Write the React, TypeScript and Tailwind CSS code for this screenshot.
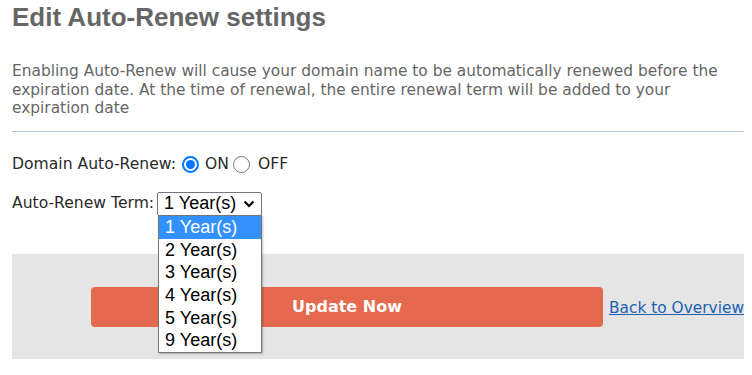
import React from "react";

const verdana = { fontFamily: '"DejaVu Sans", Verdana, sans-serif' };
const arial = { fontFamily: '"Liberation Sans", Arial, sans-serif' };

function Radio({ checked }: { checked: boolean }) {
  return checked ? (
    <span className="inline-flex h-[17px] w-[17px] items-center justify-center rounded-full border-[2px] border-[#0075ff] bg-white">
      <span className="h-[9px] w-[9px] rounded-full bg-[#0075ff]" />
    </span>
  ) : (
    <span className="inline-block h-[17px] w-[17px] rounded-full border-[1.5px] border-[#767676] bg-white" />
  );
}

export default function App() {
  const options = ["1 Year(s)", "2 Year(s)", "3 Year(s)", "4 Year(s)", "5 Year(s)", "9 Year(s)"];
  return (
    <div className="h-[375px] w-[752px] overflow-hidden bg-white">
      <div className="w-[744px] pl-[12px]">
        <h1 className="pt-[2px] text-[26px] font-bold leading-[30px] text-[#666666]" style={arial}>
          Edit Auto-Renew settings
        </h1>
        <p className="mt-[30px] text-[15.4px] leading-[18.5px] text-[#666666]" style={verdana}>
          Enabling Auto-Renew will cause your domain name to be automatically renewed before the
          expiration date. At the time of renewal, the entire renewal term will be added to your
          expiration date
        </p>
        <div className="mt-[13px] h-[1px] w-full bg-[#b3c6d8]" />
        <div className="mt-[21px] flex items-center text-[15.6px] text-[#2a2a2a]" style={verdana}>
          <span>Domain Auto-Renew:</span>
          <span className="ml-[6px] flex items-center gap-[6px]">
            <Radio checked />
            <span>ON</span>
          </span>
          <span className="ml-[4px] flex items-center gap-[8px]">
            <Radio checked={false} />
            <span>OFF</span>
          </span>
        </div>
        <div className="mt-[16px] flex items-center text-[15.6px] text-[#2a2a2a]" style={verdana}>
          <span>Auto-Renew Term:</span>
          <div className="relative ml-[3px]">
            <div
              className="flex h-[24px] w-[105px] items-center justify-between rounded-[2px] border border-[#767676] bg-white pl-[6px] pr-[6px] text-[18px] text-black"
              style={arial}
            >
              <span>1 Year(s)</span>
              <svg width="12" height="8" viewBox="0 0 12 8">
                <path d="M1.5 1.5 L6 6 L10.5 1.5" stroke="#000" strokeWidth="2.2" fill="none" />
              </svg>
            </div>
            <div
              className="absolute left-[1px] top-[23px] z-10 w-[104px] border border-[#767676] bg-white shadow-[1px_1px_2px_rgba(0,0,0,0.25)]"
              style={arial}
            >
              {options.map((o, i) => (
                <div
                  key={o}
                  className={
                    "h-[22.7px] pl-[6px] text-[18px] leading-[22.7px] " +
                    (i === 0 ? "bg-[#3390ff] text-white" : "text-black")
                  }
                >
                  {o}
                </div>
              ))}
            </div>
          </div>
        </div>
        <div className="mt-[38px] flex h-[105px] w-full items-center bg-[#e5e5e5] pl-[79px] pt-[2px]">
          <button
            className="flex h-[40px] w-[512px] items-center justify-center rounded-[4px] bg-[#e5694f] text-[16px] font-bold text-white"
            style={verdana}
          >
            Update Now
          </button>
          <a className="ml-[6px] mt-[2px] text-[15.4px] text-[#1a5fb4] underline" style={verdana}>
            Back to Overview
          </a>
        </div>
      </div>
    </div>
  );
}
